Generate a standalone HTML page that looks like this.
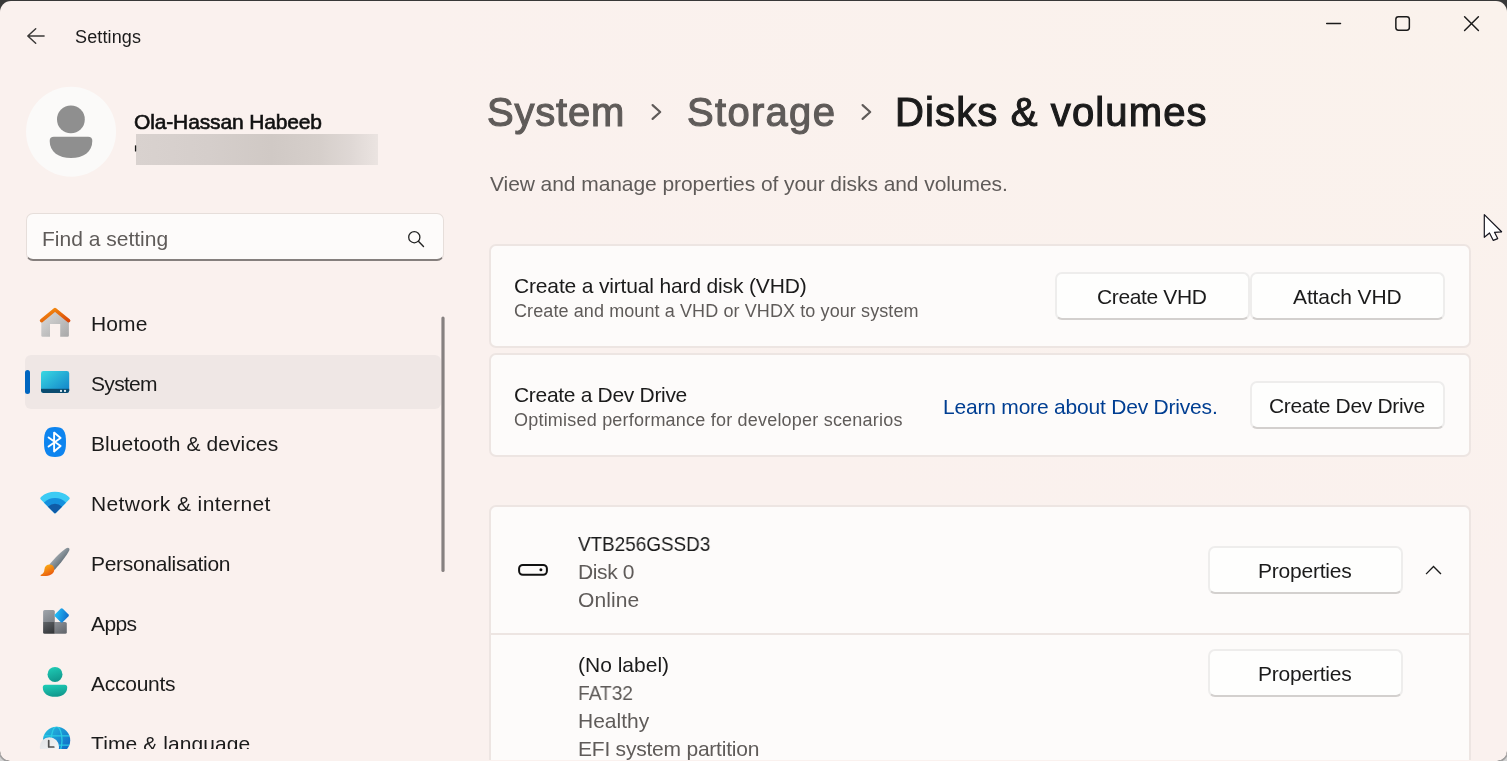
<!DOCTYPE html>
<html lang="en">
<head>
<meta charset="utf-8">
<title>Settings</title>
<style>
*{box-sizing:border-box;margin:0;padding:0}
html,body{width:1507px;height:761px;overflow:hidden;background:#383838}
body{font-family:"Liberation Sans",sans-serif;color:#1b1b1b;position:relative}
#win{position:absolute;left:0;top:1px;width:1507px;height:760px;background:radial-gradient(ellipse 1100px 600px at 100% 0%,#faf2ec 0%,#faf1ee 100%);border-radius:11px 11px 10px 10px;overflow:hidden}
.t{position:absolute;white-space:nowrap;line-height:1;transform-origin:0 0;will-change:transform}
.abs{position:absolute}
.nav{font-size:21px;color:#1b1b1b}
.card{position:absolute;background:#fdfbfa;border:2px solid #ede5e2;border-radius:7px}
.btn{position:absolute;background:#fefefd;border:2px solid #eeedec;border-bottom-color:#d3d0ce;border-radius:7px}
.g{color:#5f5b59}
</style>
</head>
<body>
<div class="abs" style="left:0;top:749px;width:12px;height:12px;background:radial-gradient(circle at 10px 2px,transparent 9.5px,#9c9c9c 10.2px,#a4a4a4 11px,#d2d2d2 11.8px)"></div>
<div class="abs" style="left:1495px;top:749px;width:12px;height:12px;background:radial-gradient(circle at 2px 2px,transparent 9.5px,#9c9c9c 10.2px,#a4a4a4 11px,#d2d2d2 11.8px)"></div>
<div id="win">

<!-- title bar -->
<svg class="abs" style="left:26px;top:26px" width="20" height="18" viewBox="0 0 20 18"><path d="M9.7 1.7 L1.8 9 L9.7 16.3 M2 9 H18.1" fill="none" stroke="#3a3837" stroke-width="1.45" stroke-linecap="round" stroke-linejoin="round"/></svg>
<div class="t" id="tSettings" style="left:75px;top:27px;font-size:18px;letter-spacing:0.13px">Settings</div>

<svg class="abs" style="left:1324px;top:21px" width="18" height="4"><path d="M2.7 1.5 H16.5" stroke="#1b1b1b" stroke-width="1.5" stroke-linecap="round"/></svg>
<svg class="abs" style="left:1393px;top:14px" width="18" height="18"><rect x="2.85" y="1.65" width="13.5" height="13.5" rx="2.6" fill="none" stroke="#1b1b1b" stroke-width="1.5"/></svg>
<svg class="abs" style="left:1462px;top:14px" width="18" height="18"><path d="M2.6 1.7 L16.4 15.5 M16.4 1.7 L2.6 15.5" stroke="#1b1b1b" stroke-width="1.5" stroke-linecap="round"/></svg>

<!-- profile -->

<div class="t" id="tName" style="left:134px;top:110px;font-size:21px;color:#111;-webkit-text-stroke:0.6px #111;letter-spacing:-0.14px">Ola-Hassan Habeeb</div>
<div class="abs" style="left:136px;top:133px;width:242px;height:31px;background:linear-gradient(90deg,#d9d2cf 0%,#d5cecb 30%,#d0c9c5 56%,#d6cfcb 76%,#dfd8d5 89%,#ebe4e1 100%)"></div>

<!-- search -->
<div class="abs" style="left:25.5px;top:212px;width:418px;height:48px;border-radius:7px;background:#fdfbfa;border:1.5px solid #e6deda;border-bottom:2px solid #857f7d"></div>
<div class="t g" id="tFind" style="left:42px;top:227px;font-size:21px">Find a setting</div>
<svg class="abs" style="left:407px;top:229px" width="20" height="20" viewBox="0 0 20 20"><circle cx="7.3" cy="7.2" r="5.6" fill="none" stroke="#222" stroke-width="1.3"/><path d="M11.4 11.3 L16.5 16.4" stroke="#222" stroke-width="1.4" stroke-linecap="round"/></svg>

<!-- nav -->
<div class="abs" style="left:25px;top:354px;width:416px;height:54px;border-radius:6px;background:#efe7e5"></div>
<div class="abs" style="left:25px;top:369px;width:5px;height:24px;border-radius:3px;background:#0066c0"></div>


<div class="t nav" id="nHome" style="left:91px;top:312px;letter-spacing:0.1px">Home</div>
<div class="t nav" id="nSystem" style="left:91px;top:372px;letter-spacing:-0.68px">System</div>
<div class="t nav" id="nBt" style="left:91px;top:432px;letter-spacing:0.09px">Bluetooth &amp; devices</div>
<div class="t nav" id="nNet" style="left:91px;top:492px;letter-spacing:0.39px">Network &amp; internet</div>
<div class="t nav" id="nPers" style="left:91px;top:552px;letter-spacing:-0.29px">Personalisation</div>
<div class="t nav" id="nApps" style="left:91px;top:612px;letter-spacing:-0.63px">Apps</div>
<div class="t nav" id="nAcc" style="left:91px;top:672px;letter-spacing:-0.26px">Accounts</div>
<div class="abs" style="left:0;top:700px;width:460px;height:48px;overflow:hidden">
  <div class="t nav" id="nTime" style="left:91px;top:32px;letter-spacing:0.09px">Time &amp; language</div>
</div>

<!-- main header -->
<div class="t" id="hSystem" style="left:487px;top:91px;font-size:40px;color:#5f5b59;-webkit-text-stroke:1.1px #5f5b59;letter-spacing:0.8px">System</div>
<div class="t" id="hStorage" style="left:687px;top:91px;font-size:40px;color:#5f5b59;-webkit-text-stroke:1.1px #5f5b59;letter-spacing:1.3px">Storage</div>
<div class="t" id="hDisks" style="left:895px;top:91px;font-size:40px;color:#1b1b1b;-webkit-text-stroke:1.1px #1b1b1b;letter-spacing:1.14px">Disks &amp; volumes</div>
<svg class="abs" style="left:648px;top:101px" width="16" height="20"><path d="M4.6 3.1 L12.2 10 L4.6 16.9" fill="none" stroke="#5f5b59" stroke-width="2.2" stroke-linecap="round" stroke-linejoin="round"/></svg>
<svg class="abs" style="left:858.1px;top:101px" width="16" height="20"><path d="M4.6 3.1 L12.2 10 L4.6 16.9" fill="none" stroke="#5f5b59" stroke-width="2.2" stroke-linecap="round" stroke-linejoin="round"/></svg>
<div class="t g" id="tSub" style="left:490px;top:172px;font-size:21px;letter-spacing:-0.07px">View and manage properties of your disks and volumes.</div>

<!-- card 1 -->
<div class="card" style="left:489px;top:243px;width:982px;height:104px"></div>
<div class="t" id="c1a" style="left:514px;top:274px;font-size:21px;letter-spacing:-0.16px">Create a virtual hard disk (VHD)</div>
<div class="t g" id="c1b" style="left:514px;top:301px;font-size:18px;letter-spacing:0.1px">Create and mount a VHD or VHDX to your system</div>
<div class="btn" style="left:1055px;top:271px;width:195px;height:48px"></div>
<div class="btn" style="left:1250px;top:271px;width:195px;height:48px"></div>
<div class="t" id="b1" style="left:1097px;top:285px;font-size:21px;letter-spacing:-0.36px">Create VHD</div>
<div class="t" id="b2" style="left:1293px;top:285px;font-size:21px;letter-spacing:-0.12px">Attach VHD</div>

<!-- card 2 -->
<div class="card" style="left:489px;top:352px;width:982px;height:104px"></div>
<div class="t" id="c2a" style="left:514px;top:383px;font-size:21px;letter-spacing:-0.31px">Create a Dev Drive</div>
<div class="t g" id="c2b" style="left:514px;top:410px;font-size:18px;letter-spacing:0.21px">Optimised performance for developer scenarios</div>
<div class="t" id="lnk" style="left:943px;top:395px;font-size:21px;color:#003e92;letter-spacing:-0.2px">Learn more about Dev Drives.</div>
<div class="btn" style="left:1250px;top:380px;width:195px;height:48px"></div>
<div class="t" id="b3" style="left:1269px;top:394px;font-size:21px;letter-spacing:-0.33px">Create Dev Drive</div>

<!-- card 3 -->
<div class="abs" style="left:480px;top:500px;width:1000px;height:259px;overflow:hidden"><div class="card" style="left:9px;top:4px;width:982px;height:300px"></div></div>
<div class="abs" style="left:491px;top:632px;width:978px;height:2px;background:#ede5e2"></div>
<svg class="abs" style="left:516px;top:560px" width="34" height="18"><rect x="3.1" y="3.9" width="27.8" height="9.9" rx="3.7" fill="none" stroke="#111" stroke-width="2"/><circle cx="24.9" cy="8.7" r="1.5" fill="#111"/></svg>
<div class="t" id="d1" style="left:578px;top:532px;font-size:21px;letter-spacing:0px;transform:scaleX(0.899)">VTB256GSSD3</div>
<div class="t g" id="d2" style="left:578px;top:560px;font-size:21px;letter-spacing:-0.36px">Disk 0</div>
<div class="t g" id="d3" style="left:578px;top:588px;font-size:21px;letter-spacing:0.1px">Online</div>
<div class="btn" style="left:1208px;top:545px;width:195px;height:48px"></div>
<div class="t" id="b4" style="left:1258px;top:559px;font-size:21px;letter-spacing:-0.22px">Properties</div>
<svg class="abs" style="left:1423px;top:561px" width="22" height="16"><path d="M3.5 11.6 L10.5 4.5 L17.5 11.6" fill="none" stroke="#1b1b1b" stroke-width="1.35" stroke-linecap="square" stroke-linejoin="miter"/></svg>

<div class="t" id="e1" style="left:578px;top:653px;font-size:21px">(No label)</div>
<div class="t g" id="e2" style="left:578px;top:681px;font-size:21px;letter-spacing:0px;transform:scaleX(0.912)">FAT32</div>
<div class="t g" id="e3" style="left:578px;top:709px;font-size:21px">Healthy</div>
<div class="t g" id="e4" style="left:578px;top:737px;font-size:21px;letter-spacing:-0.22px">EFI system partition</div>
<div class="btn" style="left:1208px;top:648px;width:195px;height:48px"></div>
<div class="t" id="b5" style="left:1258px;top:662px;font-size:21px;letter-spacing:-0.22px">Properties</div>

<!-- icons overlay: coordinates are page pixels -->
<svg class="abs" style="left:0;top:-1px" width="480" height="761" viewBox="0 0 480 761">
<defs>
<linearGradient id="gRoof" x1="0" y1="0" x2="1" y2="1"><stop offset="0" stop-color="#f7930f"/><stop offset="1" stop-color="#d9480a"/></linearGradient>
<linearGradient id="gHouse" x1="0" y1="0" x2="1" y2="1"><stop offset="0" stop-color="#dcdcdc"/><stop offset="1" stop-color="#a8a8a8"/></linearGradient>
<linearGradient id="gSys" x1="0" y1="0" x2="1" y2="1"><stop offset="0" stop-color="#3ad9e2"/><stop offset="1" stop-color="#0f7ec8"/></linearGradient>
<linearGradient id="gBrushH" x1="0" y1="0" x2="1" y2="1"><stop offset="0.25" stop-color="#aeb6bb"/><stop offset="0.75" stop-color="#52606a"/></linearGradient>
<linearGradient id="gBrushT" x1="0.2" y1="0" x2="0.8" y2="1"><stop offset="0" stop-color="#fdb716"/><stop offset="1" stop-color="#e64f0d"/></linearGradient>
<linearGradient id="gDia" x1="0" y1="0.8" x2="1" y2="0.2"><stop offset="0" stop-color="#22bdf7"/><stop offset="1" stop-color="#1270cc"/></linearGradient>
<linearGradient id="gA1" x1="0" y1="0" x2="0.6" y2="1"><stop offset="0" stop-color="#a0a5ab"/><stop offset="1" stop-color="#80858b"/></linearGradient>
<linearGradient id="gA2" x1="0" y1="0" x2="0.6" y2="1"><stop offset="0" stop-color="#606468"/><stop offset="1" stop-color="#36393c"/></linearGradient>
<linearGradient id="gA3" x1="0" y1="0" x2="0.6" y2="1"><stop offset="0" stop-color="#8e9298"/><stop offset="1" stop-color="#666a6f"/></linearGradient>
<linearGradient id="gAcc" x1="0" y1="0" x2="0.3" y2="1"><stop offset="0" stop-color="#20cfb8"/><stop offset="1" stop-color="#119a8e"/></linearGradient>
<linearGradient id="gGlobe" x1="0" y1="0" x2="1" y2="1"><stop offset="0" stop-color="#28c4e0"/><stop offset="1" stop-color="#0c5cc4"/></linearGradient>
<linearGradient id="gClock" x1="0" y1="0" x2="1" y2="1"><stop offset="0" stop-color="#dfe1e4"/><stop offset="1" stop-color="#fafafa"/></linearGradient>
<clipPath id="cpTime"><rect x="0" y="700" width="480" height="49"/></clipPath>
<clipPath id="cpGlobe"><circle cx="56.6" cy="740.3" r="13.6"/></clipPath>
<clipPath id="cpWifi"><path d="M55 513.4 Q54.4 513.4 53.8 512.6 L40.6 499.2 Q39.8 498 41 496.9 A22 22 0 0 1 69 496.9 Q70.2 498 69.4 499.2 L56.2 512.6 Q55.6 513.4 55 513.4 Z"/></clipPath>
</defs>

<rect x="441.4" y="316.4" width="3.2" height="255.6" rx="1.6" fill="#868180"/>
<rect x="134.9" y="145.2" width="1.3" height="6.4" rx="0.6" fill="#1b1b1b"/>
<circle cx="71.05" cy="131.8" r="45" fill="#fbfaf9"/>
<circle cx="70.9" cy="119.4" r="13.9" fill="#8f8f8f"/>
<path d="M53.9 136.7 H88.1 Q92.3 136.7 92.3 140.9 C92.3 152 83.2 158 71 158 C58.8 158 49.7 152 49.7 140.9 Q49.7 136.7 53.9 136.7 Z" fill="#8f8f8f"/>
<!-- home -->
<path d="M41.3 321 L55 310.6 L68.9 321 V335.4 Q68.9 336.8 67.5 336.8 H60.2 V324 H50 V336.8 H42.7 Q41.3 336.8 41.3 335.4 Z" fill="url(#gHouse)"/>
<path d="M41.6 320.6 L55 309.6 L68.6 320.6" fill="none" stroke="url(#gRoof)" stroke-width="3.6" stroke-linecap="round" stroke-linejoin="round"/>

<!-- system -->
<rect x="41" y="371" width="28.2" height="22" rx="2.4" fill="url(#gSys)"/>
<clipPath id="cpSys"><rect x="41" y="371" width="28.2" height="22" rx="2.4"/></clipPath><rect x="40" y="388.8" width="30" height="5" fill="#0b4c70" clip-path="url(#cpSys)"/>
<rect x="60" y="389.9" width="2" height="2" fill="#d8e6ee"/><rect x="64" y="389.9" width="2" height="2" fill="#d8e6ee"/>

<!-- bluetooth -->
<path d="M55 427 C63.5 427 66 431 66 442 C66 453 63.5 457 55 457 C46.500 457 44 453 44 442 C44 431 46.500 427 55 427 Z" fill="#0d84ef"/>
<path d="M48.6 437.4 L60.6 446 L54.1 451.4 V432.6 L60.6 438 L48.6 446.6" fill="none" stroke="#fff" stroke-width="1.9" stroke-linecap="round" stroke-linejoin="round"/>

<!-- wifi -->
<g clip-path="url(#cpWifi)">
<circle cx="55" cy="513.4" r="24" fill="#3ccbf4"/>
<circle cx="55" cy="513.4" r="15.3" fill="#1590dd"/>
<circle cx="55" cy="513.4" r="9.6" fill="#0f5ba7"/>
</g>

<!-- brush -->
<path d="M49.4 564.6 C55 557.600 62 551 66.200 548.200 C68.400 546.800 70.200 548.400 69.200 550.600 C66.800 555.400 60.600 563.400 54.600 570 Z" fill="url(#gBrushH)"/>
<path d="M49.800 564.600 C53 564.600 54.600 567.400 54.200 570.600 C53.600 574.600 49 576.600 41.200 576 C40.400 575.900 40.300 575.200 41 574.800 C43.600 573.400 44.200 571.800 44.400 569.400 C44.700 566.400 46.800 564.600 49.800 564.600 Z" fill="url(#gBrushT)"/>

<!-- apps -->
<path d="M44.700 610 H53.200 Q54.800 610 54.800 611.600 V622 H43.100 V611.600 Q43.100 610 44.700 610 Z" fill="url(#gA1)"/>
<path d="M43.100 622 H54.800 V633.800 H44.700 Q43.100 633.800 43.100 632.200 Z" fill="url(#gA2)"/>
<path d="M54.800 622 H65.200 Q66.800 622 66.800 623.600 V632.200 Q66.800 633.800 65.200 633.800 H54.800 Z" fill="url(#gA3)"/>
<rect x="56.200" y="609.900" width="11" height="11" rx="1.600" fill="url(#gDia)" transform="rotate(45 61.700 615.400)"/>

<!-- accounts -->
<circle cx="55" cy="674.400" r="7.500" fill="url(#gAcc)"/>
<path d="M45.400 684.800 H64.600 Q67.200 684.800 67.200 687.400 C67.200 693.400 62 696.800 55 696.800 C48 696.800 42.800 693.400 42.800 687.400 Q42.800 684.800 45.400 684.800 Z" fill="url(#gAcc)"/>

<!-- time & language (clipped by nav viewport) -->
<g clip-path="url(#cpTime)">
<circle cx="56.600" cy="740.300" r="13.600" fill="url(#gGlobe)"/>
<g clip-path="url(#cpGlobe)" fill="none" stroke="#2fd0e6" stroke-width="1.300" opacity="0.9">
<ellipse cx="56.600" cy="740.300" rx="5.400" ry="13.600"/>
<path d="M42 735.800 H72 M42 745.200 H72"/>
</g>
<circle cx="49.400" cy="746.800" r="9.600" fill="url(#gClock)"/>
<path d="M48.700 740.600 V747 H53.800" fill="none" stroke="#505050" stroke-width="1.700" stroke-linecap="round" stroke-linejoin="round"/>
</g>
</svg>

<!-- mouse cursor -->
<svg class="abs" style="left:1478px;top:208px" width="29" height="36" viewBox="1478 209 29 36"><path d="M1484.300 214.600 V237.300 L1489.500 233 L1493.300 240.400 L1497.700 238.600 L1494.500 232.300 L1501.600 231.800 Z" fill="#fff" stroke="#16161f" stroke-width="1.200" stroke-linejoin="round"/></svg>

</div>
</body>
</html>
